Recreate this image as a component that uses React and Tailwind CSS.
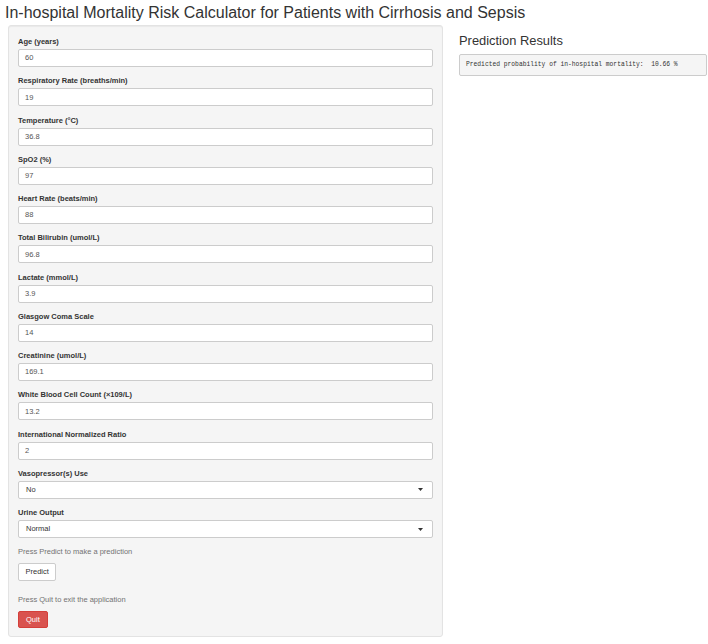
import React from "react";

const numericFields = [
  ["Age (years)", "60"],
  ["Respiratory Rate (breaths/min)", "19"],
  ["Temperature (°C)", "36.8"],
  ["SpO2 (%)", "97"],
  ["Heart Rate (beats/min)", "88"],
  ["Total Bilirubin (umol/L)", "96.8"],
  ["Lactate (mmol/L)", "3.9"],
  ["Glasgow Coma Scale", "14"],
  ["Creatinine (umol/L)", "169.1"],
  ["White Blood Cell Count (×109/L)", "13.2"],
  ["International Normalized Ratio", "2"],
];

const selectFields = [
  ["Vasopressor(s) Use", "No"],
  ["Urine Output", "Normal"],
];

function Field({ label, children }) {
  return (
    <div className="mb-[8.25px]">
      <label className="block h-[11px] leading-[11px] mb-[2px] text-[7.5px] font-bold text-[#333]">
        {label}
      </label>
      {children}
    </div>
  );
}

function NumberInput({ value }) {
  return (
    <div className="h-[18px] bg-white border border-[#ccc] rounded-[2px] px-[6px] flex items-center text-[7.5px] text-[#555]">
      {value}
    </div>
  );
}

function SelectInput({ value }) {
  return (
    <div className="h-[18px] bg-white border border-[#ccc] rounded-[2px] pl-[7px] pr-[9px] flex items-center justify-between text-[7.5px] text-[#333]">
      <span>{value}</span>
      <svg width="5" height="3" viewBox="0 0 5 3">
        <path d="M0 0h5L2.5 3z" fill="#333" />
      </svg>
    </div>
  );
}

export default function App() {
  return (
    <div className="w-[708px] h-[644px] bg-white overflow-hidden px-[8px] font-['Liberation_Sans',Arial,sans-serif] text-[#333]">
      <h2 className="text-[16px] leading-[20px] pt-[3px] -ml-[3px] mb-[2px] font-normal text-[#333]">
        In-hospital Mortality Risk Calculator for Patients with Cirrhosis and Sepsis
      </h2>

      <div className="flex gap-[16px]">
        <div className="w-[435px] shrink-0 bg-[#f5f5f5] border border-[#e3e3e3] rounded-[3px] shadow-[inset_0_1px_1px_rgba(0,0,0,0.05)] px-[9px] pt-[10px] pb-[8px]">
          {numericFields.map(([label, value]) => (
            <Field key={label} label={label}>
              <NumberInput value={value} />
            </Field>
          ))}
          {selectFields.map(([label, value]) => (
            <Field key={label} label={label}>
              <SelectInput value={value} />
            </Field>
          ))}

          <p className="text-[7.5px] leading-[11px] text-[#737373] mt-[0px] mb-[5.5px]">
            Press Predict to make a prediction
          </p>
          <button className="block h-[18px] px-[6.5px] bg-white border border-[#ccc] rounded-[2px] text-[7.5px] leading-none text-[#333]">
            Predict
          </button>

          <p className="text-[7.5px] leading-[11px] text-[#737373] mt-[13.5px] mb-[5.5px]">
            Press Quit to exit the application
          </p>
          <button className="block h-[17px] px-[7px] bg-[#d9534f] border border-[#d43f3a] rounded-[2px] text-[7.5px] leading-none text-white">
            Quit
          </button>
        </div>

        <div className="flex-1 pt-[8px]">
          <h3 className="text-[12.9px] leading-[16px] font-normal text-[#333] mb-[5px]">
            Prediction Results
          </h3>
          <pre className="-mr-[7px] h-[22px] flex items-center px-[6px] bg-[#f5f5f5] border border-[#ccc] rounded-[2px] font-['Liberation_Mono',monospace] text-[6.3px] text-[#333]">
            Predicted probability of in-hospital mortality:  10.66 %
          </pre>
        </div>
      </div>
    </div>
  );
}
